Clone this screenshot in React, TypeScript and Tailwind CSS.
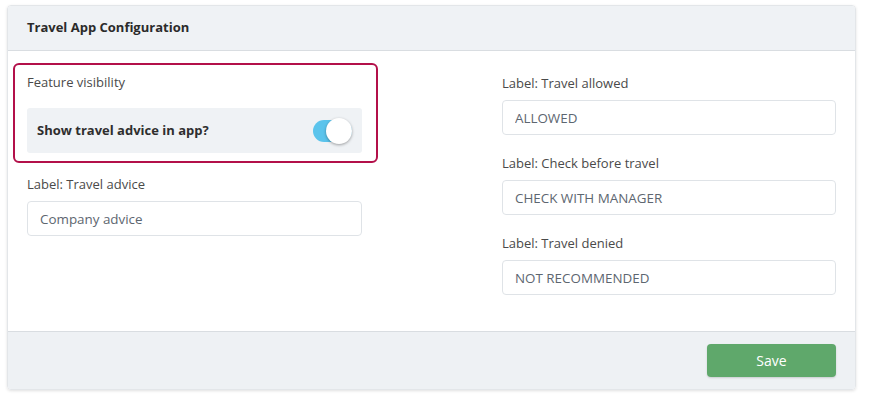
const fieldLabel = 'block text-[13px] leading-5 text-[#4a4a4a]'
const fieldInput =
  'block w-full h-[35px] rounded-[4px] border border-[#dfe3e7] bg-white px-3 text-[13.4px] text-[#5d6670] outline-none'

function Field({ label, value }: { label: string; value: string }) {
  return (
    <div>
      <label className={fieldLabel}>{label}</label>
      <input className={`mt-[7px] ${fieldInput}`} defaultValue={value} />
    </div>
  )
}

function Toggle({ on }: { on: boolean }) {
  return (
    <div className="relative h-[22px] w-[39px]">
      <div className={`absolute inset-x-0 top-0 h-[22px] rounded-full ${on ? 'bg-[#5bc4ec]' : 'bg-gray-300'}`} />
      <div
        className={`absolute top-[-2px] h-[26px] w-[26px] rounded-full bg-white shadow-[0_1px_3px_rgba(0,0,0,0.35)] ${on ? 'right-0' : 'left-0'}`}
      />
    </div>
  )
}

export default function App() {
  return (
    <div className="min-h-screen bg-white pl-[7px] pt-[5px] font-['Open_Sans','Noto_Sans',sans-serif]">
      <div className="w-[849px] overflow-hidden rounded-[4px] border border-[#e3e6e9] shadow-[0_1px_3px_rgba(0,0,0,0.12)]">
        {/* Header */}
        <div className="flex h-[45px] items-center border-b border-[#d9dde1] bg-[#eff2f5] px-[19px]">
          <h2 className="text-[13px] font-bold text-[#2b2b2b]">Travel App Configuration</h2>
        </div>

        {/* Body */}
        <div className="flex justify-between bg-white px-[19px] pt-3 pb-9">
          <div className="w-[335px]">
            <div className="-ml-[14px] -mr-[16px] rounded-[6px] border-2 border-[#b3104a] pl-3 pr-[14px] pt-[7px] pb-2">
              <div className="text-[13px] leading-5 text-[#4a4a4a]">Feature visibility</div>
              <div className="mt-4 flex h-[45px] items-center justify-between rounded-[3px] bg-[#eff2f5] pr-[10px] pl-[10px]">
                <span className="text-[13px] font-bold text-[#2e2e2e]">Show travel advice in app?</span>
                <Toggle on />
              </div>
            </div>
            <div className="mt-[11px]">
              <Field label="Label: Travel advice" value="Company advice" />
            </div>
          </div>

          <div className="mt-[10px] flex w-[334px] flex-col gap-[18px]">
            <Field label="Label: Travel allowed" value="ALLOWED" />
            <Field label="Label: Check before travel" value="CHECK WITH MANAGER" />
            <Field label="Label: Travel denied" value="NOT RECOMMENDED" />
          </div>
        </div>

        {/* Footer */}
        <div className="flex justify-end border-t border-[#d9dde1] bg-[#eef1f4] px-[19px] py-3">
          <button className="h-[33px] w-[129px] rounded-[4px] bg-[#5fa86b] text-[14px] text-white shadow-[0_1px_2px_rgba(0,0,0,0.15)]">
            Save
          </button>
        </div>
      </div>
    </div>
  )
}
